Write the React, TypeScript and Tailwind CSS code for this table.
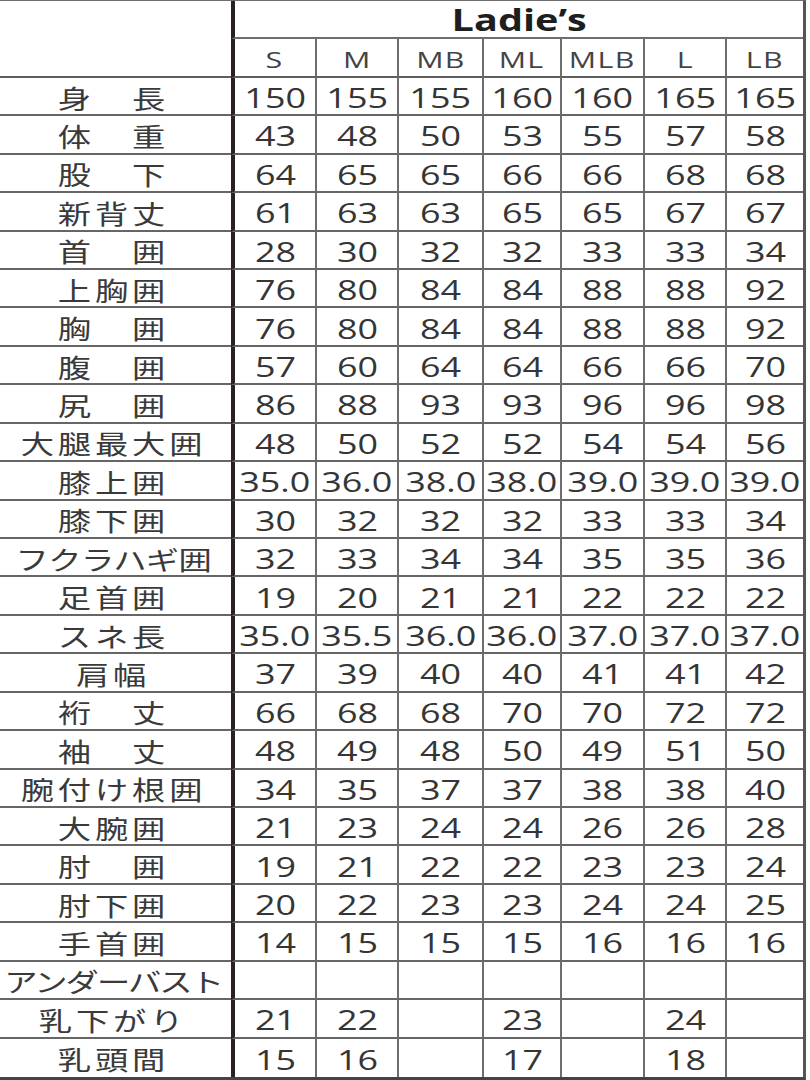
import React from "react";

type Row = { label: string; track: string; values: string[] };

const rows: Row[] = [
  { label: "身　長", track: "tracking-[3px]", values: ["150", "155", "155", "160", "160", "165", "165"] },
  { label: "体　重", track: "tracking-[3px]", values: ["43", "48", "50", "53", "55", "57", "58"] },
  { label: "股　下", track: "tracking-[3px]", values: ["64", "65", "65", "66", "66", "68", "68"] },
  { label: "新背丈", track: "tracking-[3px]", values: ["61", "63", "63", "65", "65", "67", "67"] },
  { label: "首　囲", track: "tracking-[3px]", values: ["28", "30", "32", "32", "33", "33", "34"] },
  { label: "上胸囲", track: "tracking-[3px]", values: ["76", "80", "84", "84", "88", "88", "92"] },
  { label: "胸　囲", track: "tracking-[3px]", values: ["76", "80", "84", "84", "88", "88", "92"] },
  { label: "腹　囲", track: "tracking-[3px]", values: ["57", "60", "64", "64", "66", "66", "70"] },
  { label: "尻　囲", track: "tracking-[3px]", values: ["86", "88", "93", "93", "96", "96", "98"] },
  { label: "大腿最大囲", track: "tracking-[3px]", values: ["48", "50", "52", "52", "54", "54", "56"] },
  { label: "膝上囲", track: "tracking-[3px]", values: ["35.0", "36.0", "38.0", "38.0", "39.0", "39.0", "39.0"] },
  { label: "膝下囲", track: "tracking-[3px]", values: ["30", "32", "32", "32", "33", "33", "34"] },
  { label: "フクラハギ囲", track: "tracking-[-0.5px]", values: ["32", "33", "34", "34", "35", "35", "36"] },
  { label: "足首囲", track: "tracking-[3px]", values: ["19", "20", "21", "21", "22", "22", "22"] },
  { label: "スネ長", track: "tracking-[3px]", values: ["35.0", "35.5", "36.0", "36.0", "37.0", "37.0", "37.0"] },
  { label: "肩幅", track: "tracking-[3px]", values: ["37", "39", "40", "40", "41", "41", "42"] },
  { label: "裄　丈", track: "tracking-[3px]", values: ["66", "68", "68", "70", "70", "72", "72"] },
  { label: "袖　丈", track: "tracking-[3px]", values: ["48", "49", "48", "50", "49", "51", "50"] },
  { label: "腕付け根囲", track: "tracking-[3px]", values: ["34", "35", "37", "37", "38", "38", "40"] },
  { label: "大腕囲", track: "tracking-[3px]", values: ["21", "23", "24", "24", "26", "26", "28"] },
  { label: "肘　囲", track: "tracking-[3px]", values: ["19", "21", "22", "22", "23", "23", "24"] },
  { label: "肘下囲", track: "tracking-[3px]", values: ["20", "22", "23", "23", "24", "24", "25"] },
  { label: "手首囲", track: "tracking-[3px]", values: ["14", "15", "15", "15", "16", "16", "16"] },
  { label: "アンダーバスト", track: "tracking-[-1.5px]", values: ["", "", "", "", "", "", ""] },
  { label: "乳下がり", track: "tracking-[3px]", values: ["21", "22", "", "23", "", "24", ""] },
  { label: "乳頭間", track: "tracking-[3px]", values: ["15", "16", "", "17", "", "18", ""] },
];

const sizes = ["S", "M", "MB", "ML", "MLB", "L", "LB"];

const jp = { fontFamily: '"Noto Sans CJK JP", "Noto Sans", sans-serif' };
const num = { fontFamily: '"Open Sans", "Noto Sans", sans-serif' };

function cellBorder(i: number) {
  return i === 0
    ? "border-l-4 border-l-[#2a2222]"
    : "border-l-2 border-l-[#6e6e6e]";
}

export default function App() {
  return (
    <div className="w-[810px] h-[1080px] bg-white overflow-hidden">
      <div
        className="w-[806px] h-[1080px] border-t border-t-[#6e6e6e] border-r-[3px] border-r-[#555] border-b-[3px] border-b-[#444] grid grid-cols-[231px_84px_82px_85px_78px_83px_82px_1fr] grid-rows-[repeat(28,minmax(0,1fr))] text-[#333]"
      >
        {/* header */}
        <div className="row-span-2 border-b-2 border-b-[#5e5e5e]" />
        <div className="col-span-7 border-l-4 border-l-[#2a2222] border-b-2 border-b-[#6e6e6e] flex items-center justify-center">
          <span
            className="inline-block scale-x-[1.32] text-[30px] font-bold leading-none text-[#1e1e1e] pt-[1px]"
            style={num}
          >
            Ladie’s
          </span>
        </div>
        {sizes.map((s, i) => (
          <div
            key={s}
            className={`${cellBorder(i)} border-b-2 border-b-[#5e5e5e] flex items-center justify-center`}
          >
            <span
              className="inline-block scale-x-[1.38] text-[22px] tracking-[1px] leading-none text-[#444] pt-[2px]"
              style={num}
            >
              {s}
            </span>
          </div>
        ))}

        {rows.map((r, ri) => (
          <React.Fragment key={ri}>
            <div
              className={`${ri === rows.length - 1 ? "" : "border-b-2 border-b-[#666]"} flex items-center justify-center pr-[4px]`}
            >
              <span
                className={`inline-block scale-x-[1.28] text-[26px] leading-none whitespace-nowrap text-[#3a3a3a] pt-[3px] ${r.track}`}
                style={jp}
              >
                {r.label}
              </span>
            </div>
            {r.values.map((v, i) => (
              <div
                key={i}
                className={`${cellBorder(i)} ${ri === rows.length - 1 ? "" : "border-b-2 border-b-[#666]"} flex items-center justify-center`}
              >
                <span
                  className="inline-block scale-x-[1.33] text-[27px] leading-none whitespace-nowrap text-[#353535] pt-[3px]"
                  style={num}
                >
                  {v}
                </span>
              </div>
            ))}
          </React.Fragment>
        ))}
      </div>
    </div>
  );
}
